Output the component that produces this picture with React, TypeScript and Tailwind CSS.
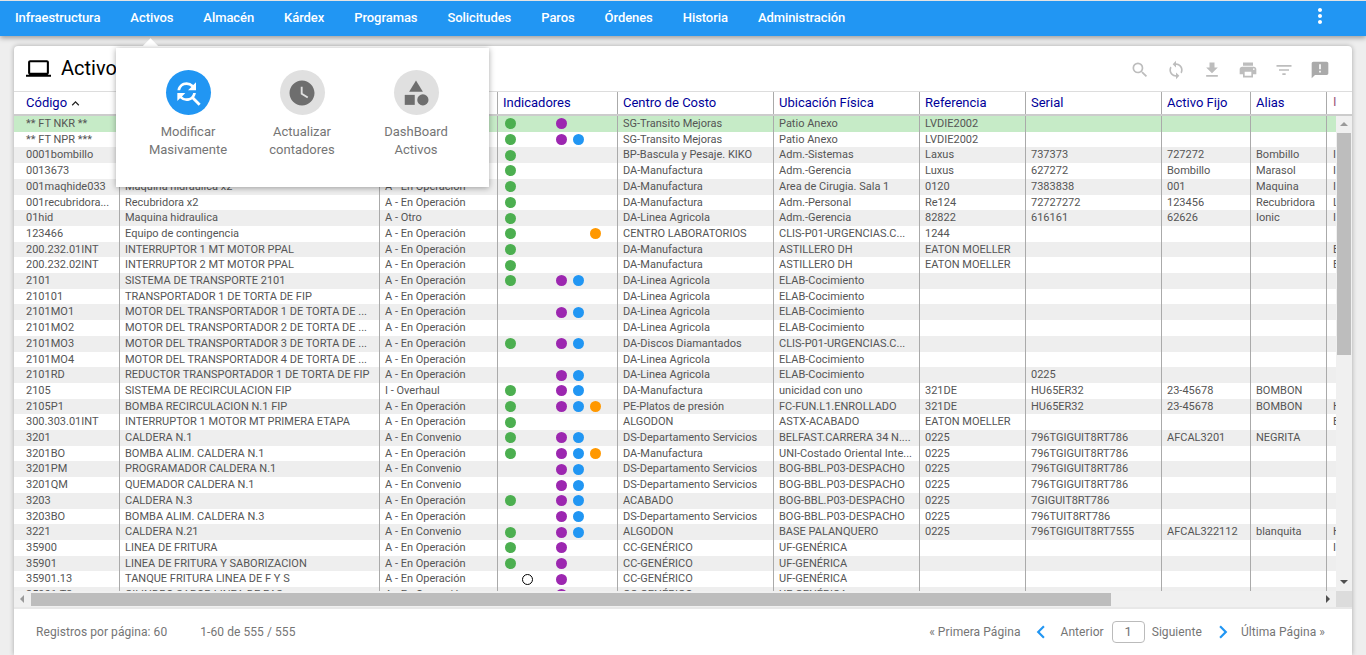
import {
  MdAnnouncement,
  MdCategory,
  MdChevronLeft,
  MdChevronRight,
  MdFileDownload,
  MdFilterList,
  MdFindReplace,
  MdKeyboardArrowUp,
  MdLaptop,
  MdMoreVert,
  MdPrint,
  MdSearch,
  MdSync,
  MdWatchLater,
} from "react-icons/md";

const navItems = [
  "Infraestructura",
  "Activos",
  "Almacén",
  "Kárdex",
  "Programas",
  "Solicitudes",
  "Paros",
  "Órdenes",
  "Historia",
  "Administración",
];

const colWidths = [
  "w-[106px] pl-3",
  "w-[260px] px-[5px]",
  "w-[118px] px-[5px]",
  "w-[120px] pl-[7px]",
  "w-[156px] px-[5px]",
  "w-[146px] px-[5px]",
  "w-[106px] px-[5px]",
  "w-[136px] px-[5px]",
  "w-[89px] px-[5px]",
  "w-[76px] px-[5px]",
];

const headers = [
  "Código",
  "Descripción",
  "Estado",
  "Indicadores",
  "Centro de Costo",
  "Ubicación Física",
  "Referencia",
  "Serial",
  "Activo Fijo",
  "Alias",
];

// dots: g green, h hollow, p purple, b blue, o orange
type Row = [string, string, string, string, string, string, string?, string?, string?, string?, string?];

const op = "A - En Operación";
const conv = "A - En Convenio";
const ds = "DS-Departamento Servicios";
const bog = "BOG-BBL.P03-DESPACHO";
const la = "DA-Linea Agricola";
const elab = "ELAB-Cocimiento";
const serial = "796TGIGUIT8RT786";

const rows: Row[] = [
  ["** FT NKR **", "", op, "gp", "SG-Transito Mejoras", "Patio Anexo", "LVDIE2002"],
  ["** FT NPR ***", "", op, "gpb", "SG-Transito Mejoras", "Patio Anexo", "LVDIE2002"],
  ["0001bombillo", "", op, "g", "BP-Bascula y Pesaje. KIKO", "Adm.-Sistemas", "Laxus", "737373", "727272", "Bombillo", "I"],
  ["0013673", "", op, "g", "DA-Manufactura", "Adm.-Gerencia", "Luxus", "627272", "Bombillo", "Marasol", "I"],
  ["001maqhide033", "Maquina hidraulica x2", op, "g", "DA-Manufactura", "Area de Cirugia. Sala 1", "0120", "7383838", "001", "Maquina", "I"],
  ["001recubridora...", "Recubridora x2", op, "g", "DA-Manufactura", "Adm.-Personal", "Re124", "72727272", "123456", "Recubridora", "L"],
  ["01hid", "Maquina hidraulica", "A - Otro", "g", la, "Adm.-Gerencia", "82822", "616161", "62626", "Ionic", "I"],
  ["123466", "Equipo de contingencia", op, "go", "CENTRO LABORATORIOS", "CLIS-P01-URGENCIAS.C...", "1244"],
  ["200.232.01INT", "INTERRUPTOR 1 MT MOTOR PPAL", op, "g", "DA-Manufactura", "ASTILLERO DH", "EATON MOELLER", "", "", "", "E"],
  ["200.232.02INT", "INTERRUPTOR 2 MT MOTOR PPAL", op, "g", "DA-Manufactura", "ASTILLERO DH", "EATON MOELLER", "", "", "", "E"],
  ["2101", "SISTEMA DE TRANSPORTE 2101", op, "gpb", la, elab],
  ["210101", "TRANSPORTADOR 1 DE TORTA DE FIP", op, "", la, elab],
  ["2101MO1", "MOTOR DEL TRANSPORTADOR 1 DE TORTA DE ...", op, "pb", la, elab],
  ["2101MO2", "MOTOR DEL TRANSPORTADOR 2 DE TORTA DE ...", op, "", la, elab],
  ["2101MO3", "MOTOR DEL TRANSPORTADOR 3 DE TORTA DE ...", op, "gpb", "DA-Discos Diamantados", "CLIS-P01-URGENCIAS.C..."],
  ["2101MO4", "MOTOR DEL TRANSPORTADOR 4 DE TORTA DE ...", op, "", la, elab],
  ["2101RD", "REDUCTOR TRANSPORTADOR 1 DE TORTA DE FIP", op, "pb", la, elab, "", "0225"],
  ["2105", "SISTEMA DE RECIRCULACION FIP", "I - Overhaul", "gpb", "DA-Manufactura", "unicidad con uno", "321DE", "HU65ER32", "23-45678", "BOMBON"],
  ["2105P1", "BOMBA RECIRCULACION N.1 FIP", op, "gpbo", "PE-Platos de presión", "FC-FUN.L1.ENROLLADO", "321DE", "HU65ER32", "23-45678", "BOMBON", "H"],
  ["300.303.01INT", "INTERRUPTOR 1 MOTOR MT PRIMERA ETAPA", op, "g", "ALGODON", "ASTX-ACABADO", "EATON MOELLER", "", "", "", "E"],
  ["3201", "CALDERA N.1", conv, "gpb", ds, "BELFAST.CARRERA 34 N....", "0225", serial, "AFCAL3201", "NEGRITA"],
  ["3201BO", "BOMBA ALIM. CALDERA N.1", op, "gpbo", "DA-Manufactura", "UNI-Costado Oriental Inte...", "0225", serial],
  ["3201PM", "PROGRAMADOR CALDERA N.1", conv, "pb", ds, bog, "0225", serial],
  ["3201QM", "QUEMADOR CALDERA N.1", conv, "pb", ds, bog, "0225", serial],
  ["3203", "CALDERA N.3", op, "gpb", "ACABADO", bog, "0225", "7GIGUIT8RT786"],
  ["3203BO", "BOMBA ALIM. CALDERA N.3", op, "pb", ds, bog, "0225", "796TUIT8RT786"],
  ["3221", "CALDERA N.21", conv, "gpb", "ALGODON", "BASE PALANQUERO", "0225", "796TGIGUIT8RT7555", "AFCAL322112", "blanquita", "H"],
  ["35900", "LINEA DE FRITURA", op, "gp", "CC-GENÉRICO", "UF-GENÉRICA", "", "", "", "", "I"],
  ["35901", "LINEA DE FRITURA Y SABORIZACION", op, "gp", "CC-GENÉRICO", "UF-GENÉRICA"],
  ["35901.13", "TANQUE FRITURA LINEA DE F Y S", op, "hp", "CC-GENÉRICO", "UF-GENÉRICA"],
  ["35901.T3", "CILINDRO SABOR LINEA DE PAS", op, "p", "CC-GENÉRICO", "UF-GENÉRICA"],
];

const slots = [
  { key: "g", cls: "bg-[#4caf50]" },
  { key: "h", cls: "border border-black bg-white" },
  { key: "-", cls: "" },
  { key: "p", cls: "bg-[#9c27b0]" },
  { key: "b", cls: "bg-[#2196f3]" },
  { key: "o", cls: "bg-[#ff9800]" },
];

const Dots = ({ value }: { value: string }) => (
  <div className="flex gap-[6px] h-full items-center">
    {slots.map((s) => (
      <span
        key={s.key}
        className={`block w-[11px] h-[11px] rounded-full ${value.includes(s.key) ? s.cls : ""}`}
      />
    ))}
  </div>
);

const PopupItem = ({
  icon,
  circle,
  lines,
}: {
  icon: React.ReactNode;
  circle: string;
  lines: string[];
}) => (
  <div className="w-[114px] flex flex-col items-center">
    <div className={`w-[45px] h-[45px] rounded-full flex items-center justify-center ${circle}`}>
      {icon}
    </div>
    <div className="mt-[8px] text-[13px] leading-[18px] text-[#757575] text-center">
      {lines.map((l) => (
        <div key={l}>{l}</div>
      ))}
    </div>
  </div>
);

const App = () => {
  return (
    <div className="relative h-[655px] w-[1366px] overflow-hidden bg-[#eeeeee] font-['Roboto',sans-serif]">
      {/* barra superior */}
      <div className="h-[36px] bg-[#2196f3] border-t border-[#e3e3e3] shadow-[0_2px_5px_rgba(0,0,0,0.35)] flex items-center relative z-10">
        {navItems.map((item) => (
          <span key={item} className="px-[15px] text-white text-[13px] tracking-[-0.07px] font-medium whitespace-nowrap pb-[1px]">
            {item}
          </span>
        ))}
        <MdMoreVert size={24} className="text-white ml-auto mr-[34px] mb-[5px]" />
      </div>

      {/* tarjeta */}
      <div className="mt-[10px] mx-[14px] h-[609px] bg-white rounded-t-sm shadow-[0_0_5px_rgba(0,0,0,0.3)] flex flex-col">
        <div className="h-[45px] flex items-center pl-[12px] pr-[22px] shrink-0">
          <MdLaptop size={25} className="text-black" />
          <span className="ml-[10px] mb-[1px] text-[20px] text-black">Activos</span>
          <div className="ml-auto mt-[3px] flex items-center gap-[16px] text-[#bdbdbd]">
            <MdSearch size={20} />
            <MdSync size={20} />
            <MdFileDownload size={20} />
            <MdPrint size={20} />
            <MdFilterList size={20} />
            <MdAnnouncement size={20} className="text-[#aaaaaa]" />
          </div>
        </div>

        {/* encabezado */}
        <div className="h-[25px] flex border-t border-[#dddddd] border-b-2 border-b-[#cccccc] shrink-0 text-[13px] text-[#000099]">
          {headers.map((h, i) => (
            <div
              key={h}
              className={`${i === 3 ? "w-[120px] pl-[5px]" : colWidths[i]} shrink-0 border-r border-[#aaaaaa] flex items-center whitespace-nowrap`}
            >
              {h}
              {i === 0 && <MdKeyboardArrowUp size={15} className="ml-[1px] text-[#222222]" />}
            </div>
          ))}
          <div className="flex-1 pl-[6px] text-[#a05a7a] overflow-hidden">I</div>
        </div>

        {/* filas y barra vertical */}
        <div className="flex h-[475px] shrink-0">
          <div className="w-[1322px] overflow-hidden">
            {rows.map((row, r) => (
              <div
                key={row[0]}
                className={`flex h-[15.71px] text-[11px] leading-[15px] text-[#555555] ${
                  r === 0 ? "bg-[#c6ebc7]" : r % 2 === 0 ? "bg-[#eeeeee]" : "bg-white"
                }`}
              >
                {colWidths.map((w, c) => (
                  <div
                    key={c}
                    className={`${w} shrink-0 h-full border-r border-[#aaaaaa] whitespace-nowrap overflow-hidden`}
                  >
                    {c === 3 ? <Dots value={row[3]} /> : row[c]}
                  </div>
                ))}
                <div className="flex-1 pl-[6px] overflow-hidden">{row[10]}</div>
              </div>
            ))}
          </div>
          <div className="w-[16px] bg-[#f0f0f0] flex flex-col items-center pt-[6px] pb-[7px]">
            <span className="w-0 h-0 border-x-[4px] border-x-transparent border-b-[4px] border-b-[#9a9a9a]" />
            <span className="w-[14px] h-[222px] mt-[7px] bg-[#bdbdbd]" />
            <span className="w-0 h-0 mt-auto border-x-[4px] border-x-transparent border-t-[4px] border-t-[#505050]" />
          </div>
        </div>

        {/* barra horizontal */}
        <div className="h-[16px] flex shrink-0">
          <div className="w-[1322px] bg-[#f0f0f0] flex items-center pl-[6px] pr-[6px]">
            <span className="w-0 h-0 border-y-[4px] border-y-transparent border-r-[4px] border-r-[#9a9a9a]" />
            <span className="w-[1080px] h-[13px] ml-[7px] mt-[1px] bg-[#bdbdbd]" />
            <span className="w-0 h-0 ml-auto border-y-[4px] border-y-transparent border-l-[4px] border-l-[#505050]" />
          </div>
          <div className="flex-1 bg-[#dcdcdc]" />
        </div>

        {/* pie */}
        <div className="flex-1 border-t-2 border-[#e8e8e8] flex items-center pl-[22px] pr-[27px] text-[12px] tracking-[0.07px] text-[#757575]">
          <span>Registros por página: 60</span>
          <span className="ml-[33px]">1-60 de 555 / 555</span>
          <div className="ml-auto flex items-center">
            <span>« Primera Página</span>
            <MdChevronLeft size={26} className="ml-[8px] text-[#2196f3]" />
            <span className="ml-[6px]">Anterior</span>
            <span className="ml-[8px] w-[33px] h-[22px] border border-[#bbbbbb] rounded-sm flex items-center justify-center text-[13px]">
              1
            </span>
            <span className="ml-[7px]">Siguiente</span>
            <MdChevronRight size={26} className="ml-[8px] text-[#2196f3]" />
            <span className="ml-[5px]">Última Página »</span>
          </div>
        </div>
      </div>

      {/* menú desplegable de Activos */}
      <span className="absolute z-20 left-[144px] top-[41px] w-[13px] h-[13px] rotate-45 bg-white" />
      <div className="absolute z-20 left-[116px] top-[48px] w-[373px] h-[139px] bg-white shadow-[0_1px_6px_rgba(0,0,0,0.35)] flex pl-[15px] pt-[22px]">
        <PopupItem
          circle="bg-[#2196f3]"
          icon={<MdFindReplace size={32} className="text-white" />}
          lines={["Modificar", "Masivamente"]}
        />
        <PopupItem
          circle="bg-[#e0e0e0]"
          icon={<MdWatchLater size={30} className="text-[#6e6e6e]" />}
          lines={["Actualizar", "contadores"]}
        />
        <PopupItem
          circle="bg-[#e0e0e0]"
          icon={<MdCategory size={30} className="text-[#6e6e6e]" />}
          lines={["DashBoard", "Activos"]}
        />
      </div>
    </div>
  );
};

export default App;
